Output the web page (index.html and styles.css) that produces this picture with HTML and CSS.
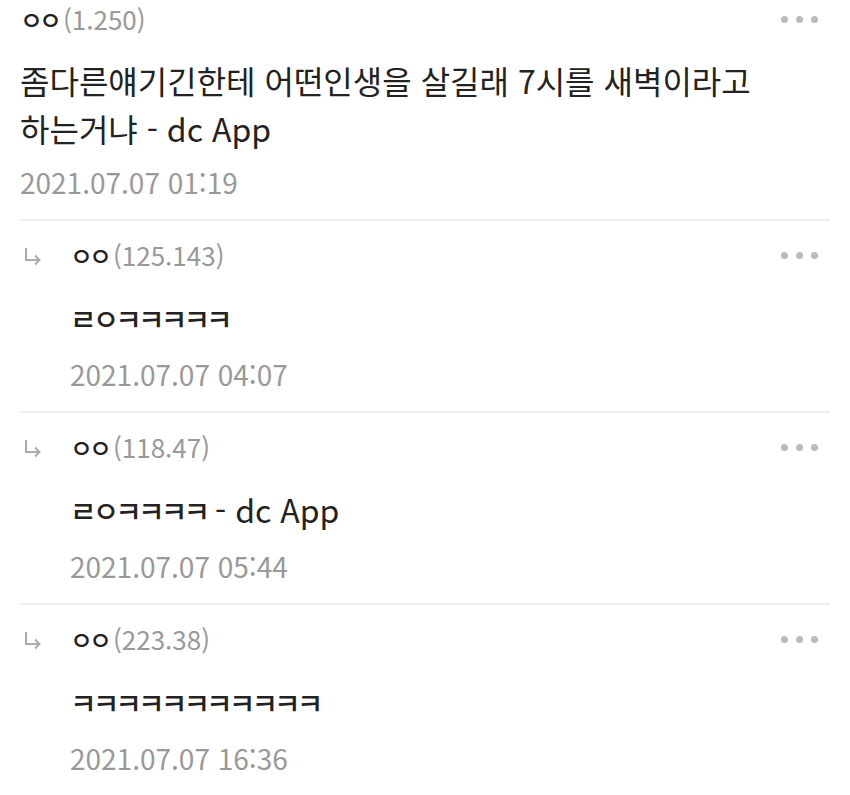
FILE: index.html
```html
<!DOCTYPE html>
<html lang="ko">
  <head>
    <meta charset="UTF-8" />
    <title>댓글</title>
    <link rel="stylesheet" href="styles.css">
  </head>
  <body>
    <div class="comment">
      <div class="head">
        <span class="nick"><span class="jamo">ㅇㅇ</span><span class="ip">(1.250)</span></span>
        <span class="more"><i></i><i></i><i></i></span>
      </div>
      <p class="title">좀다른얘기긴한테 어떤인생을 살길래 7시를 새벽이라고<br>하는거냐 - dc App</p>
      <div class="date">2021.07.07 01:19</div>
    </div>

    <div class="comment reply">
      <div class="head">
        <svg class="arrow" width="20" height="22" viewBox="0 0 20 22"><path d="M4 2v12h13M13 9.5l4.5 4.5-4.5 4.5" fill="none" stroke="#aaa" stroke-width="2"/></svg>
        <span class="nick"><span class="jamo">ㅇㅇ</span><span class="ip">(125.143)</span></span>
        <span class="more"><i></i><i></i><i></i></span>
      </div>
      <p class="text"><span class="jamo">ㄹㅇㅋㅋㅋㅋㅋ</span></p>
      <div class="date">2021.07.07 04:07</div>
    </div>

    <div class="comment reply">
      <div class="head">
        <svg class="arrow" width="20" height="22" viewBox="0 0 20 22"><path d="M4 2v12h13M13 9.5l4.5 4.5-4.5 4.5" fill="none" stroke="#aaa" stroke-width="2"/></svg>
        <span class="nick"><span class="jamo">ㅇㅇ</span><span class="ip">(118.47)</span></span>
        <span class="more"><i></i><i></i><i></i></span>
      </div>
      <p class="text"><span class="jamo">ㄹㅇㅋㅋㅋㅋ</span> - dc App</p>
      <div class="date">2021.07.07 05:44</div>
    </div>

    <div class="comment reply">
      <div class="head">
        <svg class="arrow" width="20" height="22" viewBox="0 0 20 22"><path d="M4 2v12h13M13 9.5l4.5 4.5-4.5 4.5" fill="none" stroke="#aaa" stroke-width="2"/></svg>
        <span class="nick"><span class="jamo">ㅇㅇ</span><span class="ip">(223.38)</span></span>
        <span class="more"><i></i><i></i><i></i></span>
      </div>
      <p class="text"><span class="jamo">ㅋㅋㅋㅋㅋㅋㅋㅋㅋㅋㅋ</span></p>
      <div class="date">2021.07.07 16:36</div>
    </div>
  </body>
</html>
```

FILE: styles.css
```css
* {
  margin: 0;
  padding: 0;
  box-sizing: border-box;
}

body {
  background: #fff;
  color: #222;
  font-family: "Noto Sans CJK KR", "Noto Sans", sans-serif;
  padding: 3px 20px 0;
}

.comment {
  border-bottom: 2px solid #eeeeee;
  padding-bottom: 20px;
}

.reply {
  padding-top: 18px;
  padding-left: 50px;
}

.head {
  display: flex;
  align-items: center;
  height: 32px;
  position: relative;
}

.nick {
  font-size: 26px;
  line-height: 32px;
  color: #222;
}

.nick .jamo {
  font-size: 25px;
  font-weight: 500;
  letter-spacing: -4px;
  margin-right: 5px;
}

.ip {
  color: #999;
}

.arrow {
  position: absolute;
  left: -48px;
  top: 7px;
}

.more {
  margin-left: auto;
  margin-right: 12px;
  display: flex;
  gap: 8px;
}

.more i {
  width: 7px;
  height: 7px;
  border-radius: 50%;
  background: #bbb;
}

.title {
  font-size: 32px;
  line-height: 48px;
  margin-top: 21px;
}

.text {
  font-size: 32px;
  line-height: 40px;
  margin-top: 26px;
}

.text .jamo {
  font-size: 29px;
  font-weight: 500;
  letter-spacing: -4px;
}

.date {
  font-size: 28px;
  line-height: 34px;
  color: #999;
  margin-top: 13px;
}

.reply .date {
  margin-top: 19px;
}
```
